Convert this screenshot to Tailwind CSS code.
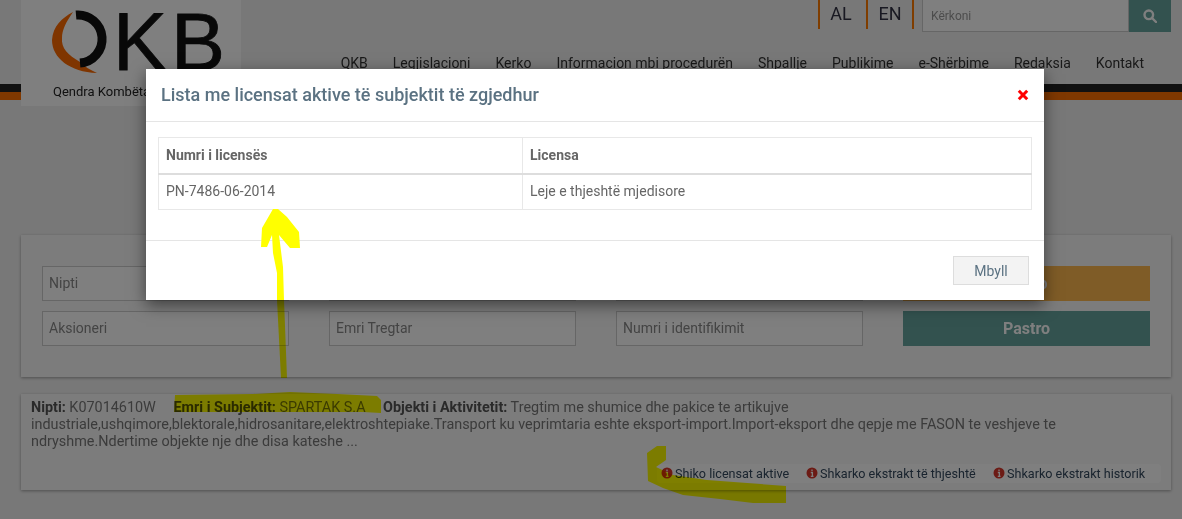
<!DOCTYPE html>
<html lang="sq">
  <head>
    <meta charset="UTF-8" />
    <meta name="viewport" content="width=device-width, initial-scale=1.0" />
    <title>QKB</title>
    <script src="https://cdn.jsdelivr.net/npm/@tailwindcss/browser@4"></script>
  </head>
  <body class="bg-[#f1f1f1] font-['Roboto',sans-serif] text-sm text-[#777] overflow-hidden">
    <div class="relative h-[519px] w-[1182px] overflow-hidden">
      <!-- Header -->
      <header class="h-[84px] pr-[11px] flex flex-col items-end">
        <div class="flex h-[32px]">
          <div class="flex h-[29px] text-lg text-[#334]">
            <a class="w-[48px] border-l-2 border-[#ff7a00] pr-[4px] text-center leading-[27px]">AL</a>
            <a class="w-[48px] border-x-2 border-[#ff7a00] text-center leading-[27px]">EN</a>
          </div>
          <div class="ml-[8px] flex">
            <input placeholder="Kërkoni" class="w-[207px] h-[32px] border border-[#ccc] border-t-0 bg-white px-[8px] text-xs placeholder:text-[#999]" />
            <button class="w-[42px] h-[32px] bg-[#66a49e] flex items-center justify-center">
              <svg class="w-[14px] h-[14px]" viewBox="0 0 14 14" fill="none" stroke="#fff" stroke-width="2.4"><circle cx="5.8" cy="5.8" r="4.3" /><path d="M9 9l4 4" stroke-linecap="round" /></svg>
            </button>
          </div>
        </div>
        <nav class="flex gap-[25px] pr-[27px] mt-[21px] text-[#333]">
          <a>QKB</a><a>Legjislacioni</a><a>Kerko</a><a>Informacion mbi procedurën</a><a>Shpallje</a><a>Publikime</a><a>e-Shërbime</a><a>Redaksia</a><a>Kontakt</a>
        </nav>
      </header>
      <div class="h-2 bg-[#222]"></div>
      <div class="h-2 bg-[#ff7000]"></div>

      <!-- Logo -->
      <div class="absolute left-[21px] top-0 w-[220px] h-[106px] bg-white">
        <svg class="absolute -left-[21px] top-0 w-[241px] h-[106px]" viewBox="0 0 241 106">
          <path d="M73 12C62 18 53 26 52 40C52 58 70 72 97 73C90 70 84 66 80 62C68 55 61 48 62 38C62 30 66 22 73 12Z" fill="#ff6a00" />
          <path d="M76 15A24 24 0 1 1 80 63" fill="none" stroke="#111" stroke-width="9" />
          <text x="113" y="70" font-family="Liberation Sans" font-size="81" letter-spacing="4" fill="#111" stroke="#111" stroke-width="0.8">KB</text>
        </svg>
        <p class="absolute left-[32px] top-[84px] text-[13px] leading-4 whitespace-nowrap text-[#222]">Qendra Kombëtare e Biznesit</p>
      </div>

      <main class="relative pl-[21px] pr-[11px] pt-[135px]">
        <!-- Search form -->
        <section class="h-[142px] bg-[#f8f8f8] shadow-[0_1px_3px_rgba(0,0,0,0.35)] px-[21px] pt-[31px]">
          <div class="grid grid-cols-4 gap-x-[40px] gap-y-[10px]">
            <input placeholder="Nipti" class="h-[35px] border border-[#ccc] bg-white px-[6px] pb-[2px] placeholder:text-[#888]" />
            <input placeholder="Emri" class="h-[35px] border border-[#ccc] bg-white px-[6px] pb-[2px] placeholder:text-[#888]" />
            <input placeholder="Adresa" class="h-[35px] border border-[#ccc] bg-white px-[6px] pb-[2px] placeholder:text-[#888]" />
            <button class="h-[35px] bg-[#ffb84e] text-white font-bold text-base">Kërko</button>
            <input placeholder="Aksioneri" class="h-[35px] border border-[#ccc] bg-white px-[6px] pb-[2px] placeholder:text-[#888]" />
            <input placeholder="Emri Tregtar" class="h-[35px] border border-[#ccc] bg-white px-[6px] pb-[2px] placeholder:text-[#888]" />
            <input placeholder="Numri i identifikimit" class="h-[35px] border border-[#ccc] bg-white px-[6px] pb-[2px] placeholder:text-[#888]" />
            <button class="h-[35px] bg-[#66a49e] text-white font-bold text-base">Pastro</button>
          </div>
        </section>

        <!-- Result -->
        <section class="relative mt-[17px] h-[96px] bg-[#f8f8f8] shadow-[0_1px_3px_rgba(0,0,0,0.35)] px-[10px] pt-[5px] text-[14.4px] leading-[17px]">
          <p>
            <b class="text-[#555]">Nipti:</b> K07014610W
            <b class="text-[#555] ml-[14px]">Emri i Subjektit:</b> SPARTAK S.A
            <b class="text-[#555] ml-[14px]">Objekti i Aktivitetit:</b> Tregtim me shumice dhe pakice te artikujve<br />
            industriale,ushqimore,blektorale,hidrosanitare,elektroshtepiake.Transport ku veprimtaria eshte eksport-import.Import-eksport dhe qepje me FASON te veshjeve te<br />
            ndryshme.Ndertime objekte nje dhe disa kateshe ...
          </p>
          <div class="absolute right-[10px] top-[70px] flex h-[19px] pb-[1px] rounded-sm bg-white text-[12.6px] text-[#34495e]">
            <a class="flex items-center gap-[2px] pl-[4px] w-[149px]">
              <svg class="w-[12px] h-[12px]" viewBox="0 0 12 12"><circle cx="6" cy="6" r="5.500" fill="#d9362a" /><path d="M6 2.500v1.500M4.800 5.500H6.400V9M4.800 9.300H7.500" stroke="#fff" stroke-width="1.300" fill="none" /></svg>
              Shiko licensat aktive
            </a>
            <a class="flex items-center gap-[2px] w-[187px]">
              <svg class="w-[12px] h-[12px]" viewBox="0 0 12 12"><circle cx="6" cy="6" r="5.500" fill="#d9362a" /><path d="M6 2.500v1.500M4.800 5.500H6.400V9M4.800 9.300H7.500" stroke="#fff" stroke-width="1.300" fill="none" /></svg>
              Shkarko ekstrakt të thjeshtë
            </a>
            <a class="flex items-center gap-[2px] w-[168px]">
              <svg class="w-[12px] h-[12px]" viewBox="0 0 12 12"><circle cx="6" cy="6" r="5.500" fill="#d9362a" /><path d="M6 2.500v1.500M4.800 5.500H6.400V9M4.800 9.300H7.500" stroke="#fff" stroke-width="1.300" fill="none" /></svg>
              Shkarko ekstrakt historik
            </a>
          </div>
        </section>
      </main>

      <!-- Yellow marker strokes drawn over the page -->
      <svg class="absolute inset-0 w-[1182px] h-[519px] mix-blend-multiply pointer-events-none" viewBox="0 0 1182 519" fill="#ffff00">
        <path d="M277 300L284 300L287 378L281 378Z" />
        <path d="M175 395L253 394L290 392L337 394L377 396L381 400L381 413L363 412L174 412Z" />
        <path d="M657 446L666 446L666 460L656 467L673 475L707 480L786 486L786 503L753 503L720 499L683 495L663 488L648 481L647 453Z" />
      </svg>

      <!-- Backdrop -->
      <div class="absolute inset-0 bg-black/50"></div>

      <!-- Modal -->
      <div class="absolute left-[146px] top-[69px] w-[898px] h-[231px] bg-white shadow-[0_5px_15px_rgba(0,0,0,0.5)] text-[#666]">
        <div class="h-[53px] border-b border-[#e5e5e5] pl-[15px] pr-[15px] flex items-center justify-between">
          <h4 class="text-lg font-medium text-[#5b7282]">Lista me licensat aktive të subjektit të zgjedhur</h4>
          <svg class="w-[12px] h-[12px]" viewBox="0 0 12 12"><path d="M1.800 1.800L10.200 10.200M10.200 1.800L1.800 10.200" stroke="#ff0000" stroke-width="3" /></svg>
        </div>
        <div class="h-[119px] px-[12px] pt-[15px] border-b border-[#e5e5e5]">
          <table class="w-[874px] table-fixed border-collapse">
            <thead>
              <tr class="h-[36px]">
                <th class="w-[364px] border border-b-2 border-[#e8e8e8] border-b-[#ddd] px-[7px] text-left font-bold">Numri i licensës</th>
                <th class="border border-b-2 border-[#e8e8e8] border-b-[#ddd] px-[7px] text-left font-bold">Licensa</th>
              </tr>
            </thead>
            <tbody>
              <tr class="h-[36px]">
                <td class="border border-[#e8e8e8] px-[7px] pb-[2px]">PN-7486-06-2014</td>
                <td class="border border-[#e8e8e8] px-[7px] pb-[2px]">Leje e thjeshtë mjedisore</td>
              </tr>
            </tbody>
          </table>
        </div>
        <div class="flex justify-end pt-[15px] pr-[15px]">
          <button class="w-[76px] h-[29px] border border-[#ddd] bg-[#f3f3f3] text-[#5b7282]">Mbyll</button>
        </div>
        <!-- Arrow tip, on top of the modal -->
        <svg class="absolute -left-[146px] -top-[69px] w-[1182px] h-[519px] pointer-events-none" viewBox="0 0 1182 519" fill="#ffff00" style="clip-path: inset(69px 138px 219px 146px)">
          <path d="M273 209L278 209L287 217L299 232L300 248L290 248L279 235L283 267L284 300L277 300L277 273L273 253L272 235L267 247L261 247L262 228Z" />
        </svg>
      </div>
    </div>
  </body>
</html>
